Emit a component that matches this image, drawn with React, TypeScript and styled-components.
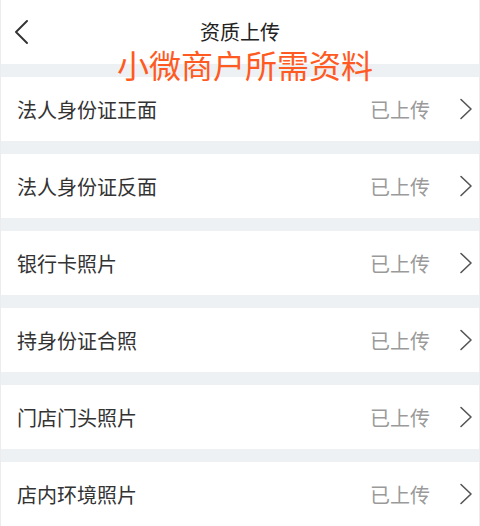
import React from "react";
import styled, { createGlobalStyle } from "styled-components";

const GlobalStyle = createGlobalStyle`
  html, body {
    margin: 0;
    padding: 0;
    background: #ffffff;
  }
  body {
    font-family: "Noto Sans CJK SC", "Noto Sans", sans-serif;
  }
`;

const Screen = styled.div`
  width: 480px;
  height: 526px;
  box-sizing: border-box;
  border-left: 1px solid #ececec;
  border-right: 1px solid #ececec;
  background: #eef1f4;
  display: flex;
  flex-direction: column;
  gap: 13px;
  overflow: hidden;
`;

const NavBar = styled.div`
  position: relative;
  height: 64px;
  flex-shrink: 0;
  background: #ffffff;
  display: flex;
  align-items: flex-start;
  justify-content: center;
`;

const BackButton = styled.button`
  position: absolute;
  left: 10px;
  top: 18px;
  width: 22px;
  height: 28px;
  padding: 0;
  border: 0;
  background: none;
  display: flex;
  align-items: center;
  justify-content: center;
`;

const Title = styled.h1`
  margin: 21px 0 0 0;
  font-size: 20px;
  line-height: 22px;
  font-weight: 400;
  color: #222222;
`;

const Annotation = styled.div`
  position: absolute;
  left: 116px;
  top: 47px;
  font-size: 32px;
  line-height: 34px;
  color: #ff5a22;
  white-space: nowrap;
  z-index: 2;
`;

const Row = styled.div`
  height: 64px;
  flex-shrink: 0;
  background: #ffffff;
  display: flex;
  align-items: center;
  padding: 0 5px 0 16px;
`;

const Label = styled.span`
  flex: 1;
  font-size: 20px;
  color: #333333;
`;

const Status = styled.span`
  font-size: 20px;
  color: #9a9a9a;
  margin-right: 28px;
`;

const Chevron = ({ color, flip }: { color: string; flip?: boolean }) => (
  <svg width="16" height="24" viewBox="0 0 16 24">
    <polyline
      points={flip ? "13,1 2,12 13,23" : "3,2.5 13,12 3,21.5"}
      fill="none"
      stroke={color}
      strokeWidth={flip ? 1.9 : 1.6}
      strokeLinecap="round"
      strokeLinejoin="round"
    />
  </svg>
);

const items = [
  "法人身份证正面",
  "法人身份证反面",
  "银行卡照片",
  "持身份证合照",
  "门店门头照片",
  "店内环境照片",
];

const App = () => (
  <>
    <GlobalStyle />
    <Screen>
      <NavBar>
        <BackButton>
          <Chevron color="#333333" flip />
        </BackButton>
        <Title>资质上传</Title>
        <Annotation>小微商户所需资料</Annotation>
      </NavBar>
      {items.map((item) => (
        <Row key={item}>
          <Label>{item}</Label>
          <Status>已上传</Status>
          <Chevron color="#555555" />
        </Row>
      ))}
    </Screen>
  </>
);

export default App;
